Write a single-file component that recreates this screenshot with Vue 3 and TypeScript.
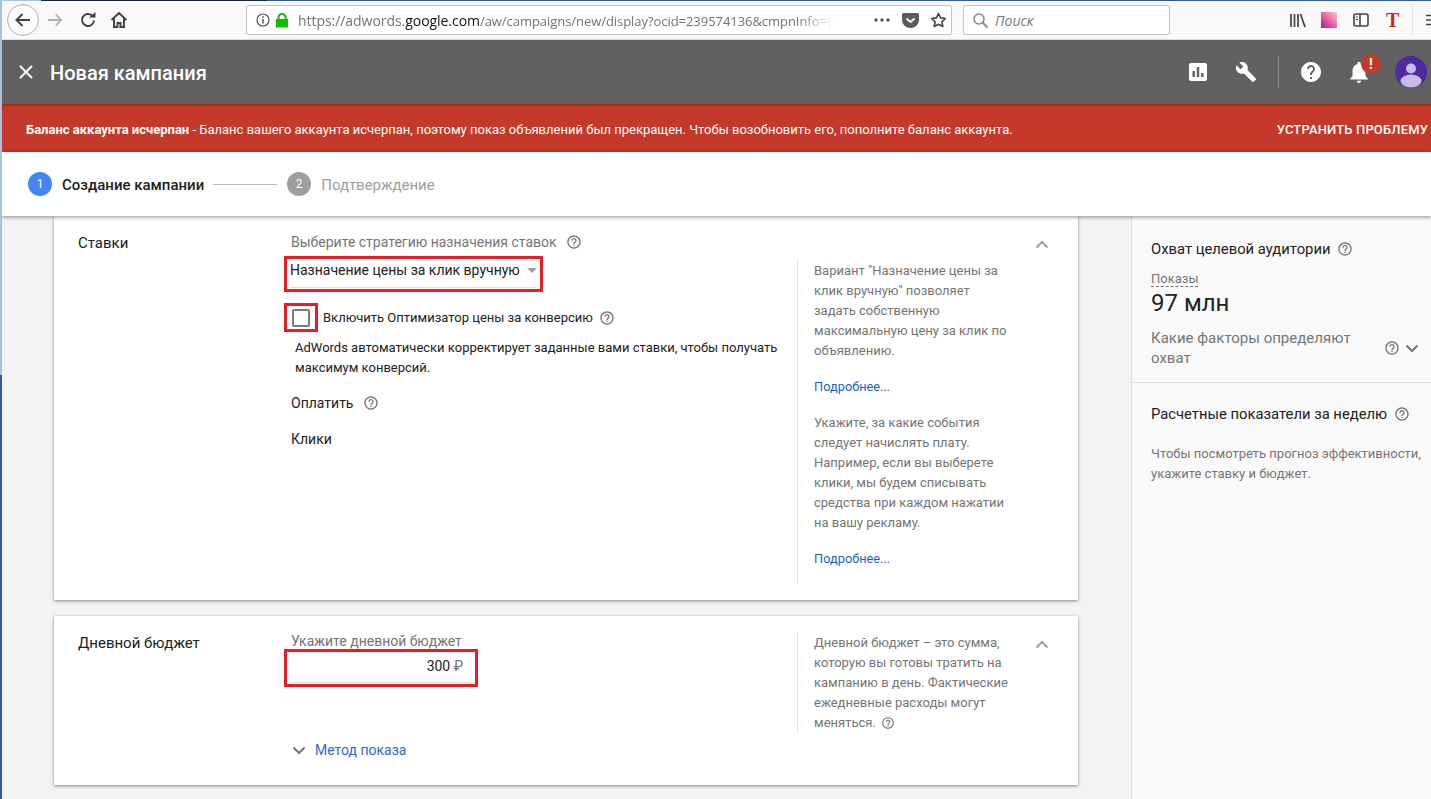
<script setup lang="ts">
const helpPath = 'M11 18h2v-2h-2v2zm1-16C6.48 2 2 6.48 2 12s4.48 10 10 10 10-4.48 10-10S17.52 2 12 2zm0 18c-4.41 0-8-3.59-8-8s3.59-8 8-8 8 3.59 8 8-3.59 8-8 8zm0-14c-2.21 0-4 1.79-4 4h2c0-1.1.9-2 2-2s2 .9 2 2c0 2-3 1.75-3 5h2c0-2.25 3-2.5 3-5 0-2.21-1.79-4-4-4z'
</script>

<template>
  <div class="page">
    <div class="titlebar"></div>
    <div class="browser">
      <div class="nav-back">
        <svg width="20" height="20" viewBox="0 0 20 20"><path d="M17 10H4M9.500 4 3.500 10l6 6" fill="none" stroke="#444" stroke-width="2" /></svg>
      </div>
      <svg class="nav-forward" width="18" height="18" viewBox="0 0 20 20"><path d="M2 10h15M11 4l6 6-6 6" fill="none" stroke="#b1b1b3" stroke-width="2" /></svg>
      <svg class="nav-reload" width="18" height="18" viewBox="0 0 18 18"><path d="M15 9.500A6 6 0 1 1 13 4.500" fill="none" stroke="#444" stroke-width="2" /><path d="M10 6.500h6.500V1z" fill="#444" /></svg>
      <svg class="nav-home" width="18" height="18" viewBox="0 0 18 18"><path d="M1.500 9 9 2l7.500 7M4 7.500V16h3.500v-4h3v4H14V7.500" fill="none" stroke="#444" stroke-width="2" /></svg>
      <div class="urlbar">
        <svg width="14" height="14" viewBox="0 0 14 14"><circle cx="7" cy="7" r="6" fill="none" stroke="#555" stroke-width="1.200" /><path d="M7 6v4.500M7 3.200v1.600" stroke="#555" stroke-width="1.500" /></svg>
        <svg class="lock" width="14" height="15" viewBox="0 0 14 15"><rect x="1" y="6" width="12" height="8.500" fill="#12bc00" /><path d="M3.500 6.500V4.500a3.500 3.500 0 0 1 7 0v2" fill="none" stroke="#12bc00" stroke-width="2" /></svg>
        <div class="url"><span>https://adwords.</span><b>google.com</b><span class="url-tail">/aw/campaigns/new/display?ocid=239574136&amp;cmpnInfo={"</span></div>
        <svg class="dots" width="16" height="4" viewBox="0 0 16 4"><circle cx="2" cy="2" r="1.700" fill="#555" /><circle cx="8" cy="2" r="1.700" fill="#555" /><circle cx="14" cy="2" r="1.700" fill="#555" /></svg>
        <svg class="pocket" width="17" height="15" viewBox="0 0 17 15"><path d="M1.500 0h14A1.500 1.500 0 0 1 17 1.500V7a8.500 8 0 0 1-17 0V1.500A1.500 1.500 0 0 1 1.500 0z" fill="#5b5b5e" /><path d="M4.500 5.500 8.500 9l4-3.500" fill="none" stroke="#fff" stroke-width="2" /></svg>
        <svg class="star" width="17" height="16" viewBox="0 0 17 16"><path d="m8.500 1.500 2.100 4.400 4.800.6-3.500 3.300.9 4.700-4.300-2.300-4.300 2.300.9-4.700L1.600 6.500l4.800-.6z" fill="none" stroke="#444" stroke-width="1.600" stroke-linejoin="round" /></svg>
      </div>
      <div class="searchbar">
        <svg width="17" height="17" viewBox="0 0 17 17"><circle cx="7" cy="7" r="5" fill="none" stroke="#8a8a8a" stroke-width="1.600" /><path d="m10.500 10.500 5 5" stroke="#8a8a8a" stroke-width="2" /></svg>
        <span>Поиск</span>
      </div>
      <div class="tools">
        <svg width="16" height="15" viewBox="0 0 16 15"><path d="M1 1v13M4.500 1v13M8 1v13M10.500 1l4.500 13" stroke="#444" stroke-width="1.700" fill="none" /></svg>
        <div class="ext-swatch"></div>
        <svg width="16" height="14" viewBox="0 0 16 14"><rect x="1" y="1" width="14" height="12" rx="2" fill="none" stroke="#444" stroke-width="1.600" /><path d="M7 1v12" stroke="#444" stroke-width="1.600" /><path d="M3 4h2M3 6.500h2" stroke="#444" /></svg>
        <span class="ext-t">T</span>
        <div class="tools-sep"></div>
        <svg width="10" height="12" viewBox="0 0 10 12"><path d="M0 1.500h10M0 6h10M0 10.500h10" stroke="#444" stroke-width="1.600" /></svg>
      </div>
    </div>

    <header class="appbar">
      <svg class="close" width="16" height="16" viewBox="0 0 16 16"><path d="m2 2 12 12M14 2 2 14" stroke="#fff" stroke-width="2" /></svg>
      <h1>Новая кампания</h1>
      <div class="appbar-actions">
        <svg class="a-chart" width="18" height="18" viewBox="0 0 18 18"><rect width="18" height="18" rx="2" fill="#fff" /><path d="M3.500 8h2.400v6H3.500zM7.800 4h2.400v10H7.800zM12.100 10h2.400v4h-2.400z" fill="#616161" /></svg>
        <svg class="a-wrench" width="22" height="22" viewBox="0 0 24 24"><path fill="#fff" d="M22.700 19l-9.100-9.100c.9-2.300.4-5-1.500-6.900-2-2-5-2.400-7.400-1.300L9 6 6 9 1.600 4.700C.4 7.100.9 10.100 2.900 12.100c1.900 1.900 4.600 2.400 6.900 1.500l9.100 9.100c.4.400 1 .4 1.400 0l2.300-2.300c.5-.4.5-1.100.1-1.400z" /></svg>
        <div class="a-sep"></div>
        <svg class="a-help" width="24" height="24" viewBox="0 0 24 24"><path fill="#fff" d="M12 2C6.480 2 2 6.480 2 12s4.480 10 10 10 10-4.480 10-10S17.520 2 12 2zm1 17h-2v-2h2v2zm2.070-7.750-.9.920C13.450 12.900 13 13.500 13 15h-2v-.5c0-1.100.45-2.100 1.170-2.830l1.240-1.260c.37-.36.590-.86.590-1.410 0-1.100-.9-2-2-2s-2 .9-2 2H8c0-2.210 1.790-4 4-4s4 1.790 4 4c0 .88-.36 1.680-.93 2.250z" /></svg>
        <div class="a-bell">
          <svg width="26" height="26" viewBox="0 0 24 24"><path fill="#fff" d="M12 22c1.100 0 2-.9 2-2h-4c0 1.100.9 2 2 2zm6-6v-5c0-3.070-1.630-5.640-4.500-6.320V4c0-.83-.67-1.500-1.500-1.500s-1.500.67-1.500 1.500v.68C7.640 5.360 6 7.920 6 11v5l-2 2v1h16v-1l-2-2z" /></svg>
          <span class="badge">!</span>
        </div>
        <svg class="a-avatar" width="32" height="32" viewBox="0 0 32 32"><circle cx="16" cy="16" r="16" fill="#4e2a9e" /><circle cx="16" cy="12.500" r="5" fill="#c9bbe4" /><ellipse cx="16" cy="25" rx="10.500" ry="6.500" fill="#c9bbe4" /></svg>
      </div>
    </header>

    <div class="alert">
      <p><b>Баланс аккаунта исчерпан</b> - Баланс вашего аккаунта исчерпан, поэтому показ объявлений был прекращен. Чтобы возобновить его, пополните баланс аккаунта.</p>
      <span class="alert-fix">УСТРАНИТЬ ПРОБЛЕМУ</span>
    </div>

    <div class="stepper">
      <span class="step-num active">1</span>
      <span class="step-label active">Создание кампании</span>
      <span class="step-line"></span>
      <span class="step-num">2</span>
      <span class="step-label">Подтверждение</span>
    </div>

    <div class="body">
      <main class="main">
        <section class="card card-bids">
          <h2>Ставки</h2>
          <div class="fields">
            <div class="caption">Выберите стратегию назначения ставок
              <svg class="help" viewBox="0 0 24 24"><path :d="helpPath" /></svg>
            </div>
            <div class="marked select-mark">
              <div class="select"><span>Назначение цены за клик вручную</span><i class="caret"></i></div>
            </div>
            <div class="check-row">
              <div class="marked check-mark"><span class="checkbox"></span></div>
              <span class="check-label">Включить Оптимизатор цены за конверсию</span>
              <svg class="help" viewBox="0 0 24 24"><path :d="helpPath" /></svg>
            </div>
            <p class="check-hint">AdWords автоматически корректирует заданные вами ставки, чтобы получать максимум конверсий.</p>
            <div class="pay">Оплатить <svg class="help" viewBox="0 0 24 24"><path :d="helpPath" /></svg></div>
            <div class="clicks">Клики</div>
          </div>
          <aside class="notes notes-bids">
            <p>Вариант "Назначение цены за клик вручную" позволяет задать собственную максимальную цену за клик по объявлению.</p>
            <a>Подробнее...</a>
            <p>Укажите, за какие события следует начислять плату. Например, если вы выберете клики, мы будем списывать средства при каждом нажатии на вашу рекламу.</p>
            <a>Подробнее...</a>
          </aside>
          <svg class="collapse" width="14" height="9" viewBox="0 0 14 9"><path d="M1.500 7.500 7 2l5.500 5.500" fill="none" stroke="#9e9e9e" stroke-width="2" /></svg>
        </section>

        <section class="card card-budget">
          <h2>Дневной бюджет</h2>
          <div class="fields">
            <div class="caption caption-tight">Укажите дневной бюджет</div>
            <div class="marked budget-mark">
              <div class="budget-input">300 <span class="rub">₽</span></div>
            </div>
            <div class="method">
              <svg width="14" height="9" viewBox="0 0 14 9"><path d="M1.500 1.500 7 7l5.500-5.500" fill="none" stroke="#757575" stroke-width="2" /></svg>
              <a>Метод показа</a>
            </div>
          </div>
          <aside class="notes notes-budget">
            <p>Дневной бюджет – это сумма, которую вы готовы тратить на кампанию в день. Фактические ежедневные расходы могут меняться. <svg class="help" viewBox="0 0 24 24"><path :d="helpPath" /></svg></p>
          </aside>
          <svg class="collapse" width="14" height="9" viewBox="0 0 14 9"><path d="M1.500 7.500 7 2l5.500 5.500" fill="none" stroke="#9e9e9e" stroke-width="2" /></svg>
        </section>
      </main>

      <aside class="side">
        <div class="side-top">
          <div class="side-title">Охват целевой аудитории <svg class="help" viewBox="0 0 24 24"><path :d="helpPath" /></svg></div>
          <span class="metric-name">Показы</span>
          <div class="metric">97 млн</div>
          <div class="factors">
            <span>Какие факторы определяют охват</span>
            <svg class="help" viewBox="0 0 24 24"><path :d="helpPath" /></svg>
            <svg class="factors-chev" width="14" height="9" viewBox="0 0 14 9"><path d="M1.500 1.500 7 7l5.500-5.500" fill="none" stroke="#757575" stroke-width="2" /></svg>
          </div>
        </div>
        <div class="side-bottom">
          <div class="side-title">Расчетные показатели за неделю <svg class="help" viewBox="0 0 24 24"><path :d="helpPath" /></svg></div>
          <p>Чтобы посмотреть прогноз эффективности, укажите ставку и бюджет.</p>
        </div>
      </aside>
    </div>
  </div>
</template>

<style>
html, body {
  margin: 0;
  overflow: hidden;
}
</style>

<style scoped>
.page {
  width: 1431px;
  height: 799px;
  overflow: hidden;
  box-sizing: border-box;
  border-left: 2px solid #2f5a9e;
  border-image: linear-gradient(#a9c0e2 0 47%, #2f5a9e 47%) 1;
  font-family: Roboto, "Noto Sans", sans-serif;
  color: #212121;
  background: #f3f3f3;
  display: flex;
  flex-direction: column;
}

/* browser chrome */
.titlebar {
  height: 1px;
  flex: none;
  background: linear-gradient(to right, #a9c0e2 39px, #16233f 39px, #16233f 265px, #2f5a9e 265px);
}
.browser {
  height: 39px;
  flex: none;
  box-sizing: border-box;
  background: #f9f9fa;
  border-bottom: 1px solid #ddd;
  display: flex;
  align-items: center;
}
.nav-back {
  width: 30px;
  height: 30px;
  margin-left: 5px;
  border: 1px solid #b1b1b3;
  border-radius: 50%;
  background: #fbfbfb;
  display: flex;
  align-items: center;
  justify-content: center;
  flex: none;
}
.nav-forward {
  margin-left: 7px;
  flex: none;
}
.nav-reload {
  margin-left: 15px;
  flex: none;
}
.nav-home {
  margin-left: 13px;
  flex: none;
}
.urlbar {
  width: 706px;
  height: 30px;
  margin-left: 118px;
  box-sizing: border-box;
  background: #fff;
  border: 1px solid #c4c4c4;
  border-radius: 2px;
  display: flex;
  align-items: center;
  padding-left: 9px;
  flex: none;
}
.lock {
  margin-left: 5px;
  flex: none;
}
.url {
  width: 542px;
  margin-left: 9px;
  font-family: "Open Sans", sans-serif;
  font-size: 14px;
  color: #737373;
  white-space: nowrap;
  overflow: hidden;
  -webkit-mask-image: linear-gradient(to right, #000 92%, transparent 99%);
  mask-image: linear-gradient(to right, #000 92%, transparent 99%);
  letter-spacing: -0.05px;
}
.url b {
  font-weight: 400;
  color: #111;
}
.url-tail {
  font-size: 13px;
}
.dots {
  margin-left: 34px;
  flex: none;
}
.pocket {
  margin-left: 12px;
  flex: none;
}
.star {
  margin-left: 11px;
  flex: none;
}
.searchbar {
  width: 207px;
  height: 30px;
  margin-left: 11px;
  box-sizing: border-box;
  background: #fff;
  border: 1px solid #c4c4c4;
  border-radius: 2px;
  display: flex;
  align-items: center;
  gap: 6px;
  padding-left: 8px;
  font-family: "Open Sans", sans-serif;
  font-size: 14px;
  font-style: italic;
  color: #77787a;
  flex: none;
}
.tools {
  display: flex;
  align-items: center;
  margin-left: 120px;
}
.ext-swatch {
  width: 16px;
  height: 16px;
  margin-left: 15px;
  background: linear-gradient(45deg, #a0189c, #f06fa8 55%, #fbc9c0);
}
.tools > svg:nth-of-type(2) {
  margin-left: 16px;
}
.ext-t {
  margin-left: 17px;
  width: 14px;
  font-family: "Liberation Serif", serif;
  font-size: 20px;
  font-weight: 700;
  color: #b5301e;
}
.tools-sep {
  width: 1px;
  height: 32px;
  background: #e2e2e2;
  margin: 0 13px 0 12px;
}

/* app bar */
.appbar {
  height: 64px;
  flex: none;
  background: #616161;
  display: flex;
  align-items: center;
  padding-left: 16px;
  color: #fff;
}
.close {
  flex: none;
}
.appbar h1 {
  margin: 0 0 0 16px;
  padding-top: 2px;
  font-size: 20px;
  font-weight: 500;
}
.appbar-actions {
  margin-left: auto;
  display: flex;
  align-items: center;
  padding-right: 4px;
}
.a-wrench {
  margin-left: 28px;
}
.a-sep {
  width: 1px;
  height: 32px;
  background: #8f8f8f;
  margin: 0 20px 0 21px;
}
.a-bell {
  position: relative;
  width: 26px;
  height: 26px;
  margin-left: 23px;
}
.badge {
  position: absolute;
  top: -5px;
  left: 15px;
  width: 20px;
  height: 20px;
  border-radius: 50%;
  background: #c5392a;
  font-size: 14px;
  font-weight: 700;
  line-height: 20px;
  text-align: center;
}
.a-avatar {
  margin-left: 23px;
}

/* alert */
.alert {
  height: 48px;
  flex: none;
  box-sizing: border-box;
  background: #c5392a;
  color: #fff;
  display: flex;
  align-items: center;
  justify-content: space-between;
  padding: 2px 0 0 24px;
  font-size: 13px;
  box-shadow: inset 0 4px 3px -3px rgba(0, 0, 0, 0.3);
}
.alert p {
  margin: 0;
}
.alert b {
  font-weight: 700;
}
.alert-fix {
  font-weight: 500;
  letter-spacing: 0.15px;
  padding-right: 3px;
}

/* stepper */
.stepper {
  height: 64px;
  flex: none;
  box-sizing: border-box;
  background: #fff;
  display: flex;
  align-items: center;
  padding-left: 26px;
  font-size: 15px;
  box-shadow: 0 1px 4px rgba(0, 0, 0, 0.45);
  position: relative;
  z-index: 2;
}
.step-num {
  width: 24px;
  height: 24px;
  border-radius: 50%;
  background: #9e9e9e;
  color: #fff;
  font-size: 12px;
  line-height: 24px;
  text-align: center;
}
.step-num.active {
  background: #4285f4;
}
.step-label {
  margin-left: 10px;
  padding-top: 2px;
  color: #9e9e9e;
}
.step-label.active {
  color: #212121;
  font-weight: 500;
}
.step-line {
  width: 64px;
  height: 1px;
  background: #bdbdbd;
  margin: 0 10px 0 9px;
}

/* content */
.body {
  flex: 1;
  min-height: 0;
  display: flex;
}
.main {
  width: 1129px;
  flex: none;
  box-sizing: border-box;
  padding: 0 53px 0 52px;
  display: flex;
  flex-direction: column;
  gap: 16px;
}
.card {
  background: #fff;
  box-shadow: 0 1px 3px rgba(0, 0, 0, 0.45);
  display: flex;
  position: relative;
  box-sizing: border-box;
}
.card-bids {
  height: 384px;
}
.card-budget {
  height: 169px;
}
.card h2 {
  width: 213px;
  margin: 17px 0 0 24px;
  font-size: 15px;
  line-height: 20px;
  font-weight: 400;
  flex: none;
}
.fields {
  width: 506px;
  flex: none;
  font-size: 14px;
}
.caption {
  margin-top: 17px;
  font-size: 14px;
  line-height: 18px;
  color: #757575;
}
.caption-tight {
  margin-top: 16px;
}
.help {
  width: 16px;
  height: 16px;
  fill: #757575;
  vertical-align: -3px;
  margin-left: 6px;
}
.marked {
  border: 3px solid #ed1c24;
  box-sizing: border-box;
}
.select-mark {
  width: 259px;
  height: 36px;
  margin: 5px 0 0 -7px;
  padding: 0 3px;
}
.select {
  height: 29px;
  border-bottom: 1px solid #e0e0e0;
  display: flex;
  align-items: flex-start;
  padding-top: 2px;
  box-sizing: border-box;
  line-height: 18px;
}
.caret {
  width: 0;
  height: 0;
  margin: 7px 0 0 7px;
  border: 5px solid transparent;
  border-top-color: #9e9e9e;
  border-bottom: 0;
}
.check-row {
  display: flex;
  align-items: center;
  margin: 11px 0 0 -7px;
  font-size: 13px;
}
.check-mark {
  width: 34px;
  height: 29px;
  display: flex;
  align-items: center;
  justify-content: center;
  flex: none;
}
.checkbox {
  width: 14px;
  height: 14px;
  border: 2px solid #7c7c7c;
  border-radius: 2px;
}
.check-label {
  margin-left: 5px;
}
.check-hint {
  width: 490px;
  margin: 6px 0 0 4px;
  font-size: 13px;
  line-height: 20px;
}
.pay {
  margin-top: 15px;
  line-height: 20px;
}
.clicks {
  margin-top: 16px;
  line-height: 20px;
}
.notes {
  width: 216px;
  box-sizing: border-box;
  border-left: 1px solid #e0e0e0;
  margin-top: 44px;
  padding: 0 5px 0 16px;
  font-size: 13px;
  line-height: 20px;
  color: #757575;
  flex: none;
}
.notes p {
  margin: 0;
}
.notes a {
  display: block;
  font-size: 12.800px;
  color: #1a5fd0;
  margin: 16px 0;
}
.notes a:last-child {
  margin-bottom: 0;
}
.notes-bids {
  height: 323px;
  padding-top: 1px;
}
.notes-budget {
  margin-top: 17px;
  height: 99px;
}
.notes-budget .help {
  width: 14px;
  height: 14px;
  margin-left: 2px;
}
.collapse {
  position: absolute;
  top: 24px;
  left: 981px;
}
.budget-mark {
  width: 194px;
  height: 38px;
  margin: -1px 0 0 -7px;
  padding: 0 3px;
}
.budget-input {
  height: 31px;
  box-sizing: border-box;
  border-bottom: 1px solid #e0e0e0;
  text-align: right;
  padding: 5px 9px 0 0;
  line-height: 18px;
}
.rub {
  color: #757575;
}
.method {
  display: flex;
  align-items: center;
  gap: 9px;
  margin-top: 53px;
  line-height: 20px;
}
.method svg {
  margin-left: 1px;
}
.method a {
  color: #3367d6;
}

/* side panel */
.side {
  flex: 1;
  background: #fafafa;
  border-left: 1px solid #e0e0e0;
  font-size: 14px;
  box-sizing: border-box;
}
.side-top {
  height: 167px;
  box-sizing: border-box;
  padding: 23px 10px 0 19px;
  border-bottom: 1px solid #e0e0e0;
}
.side-title {
  font-size: 14.800px;
  line-height: 20px;
}
.side-title .help {
  margin-left: 3px;
}
.metric-name {
  display: inline-block;
  margin-top: 13px;
  font-size: 13px;
  line-height: 14px;
  color: #757575;
  border-bottom: 1px dashed #757575;
}
.metric {
  font-size: 24px;
  line-height: 28px;
  margin-top: 2px;
}
.factors {
  display: flex;
  align-items: center;
  margin-top: 11px;
  font-size: 15px;
  line-height: 20px;
  color: #757575;
}
.factors span {
  width: 231px;
  flex: none;
}
.factors .help {
  margin-left: 2px;
  flex: none;
}
.factors-chev {
  margin-left: 5px;
}
.side-bottom {
  padding: 21px 6px 0 19px;
}
.side-bottom p {
  margin: 20px 0 0;
  font-size: 13px;
  line-height: 20px;
  color: #757575;
}
</style>
